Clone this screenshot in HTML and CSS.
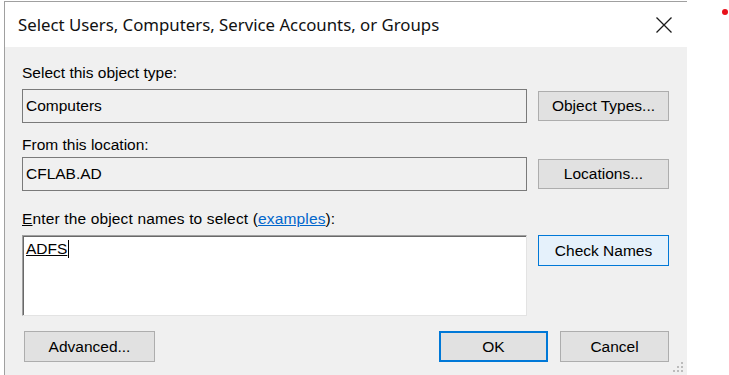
FILE: index.html
```html
<!doctype html>
<html>
<head>
	<title>Select Users, Computers, Service Accounts, or Groups</title>
	<meta charset="utf-8">
	<link rel="stylesheet" href="styles.css">
</head>
<body>
	<div class="dialog">
		<div class="titlebar">
			<span class="title">Select Users, Computers, Service Accounts, or Groups</span>
			<span class="close">
				<svg width="16" height="16" viewBox="0 0 16 16"><path d="M0.5 0.5 L15.5 15.5 M15.5 0.5 L0.5 15.5" stroke="#1a1a1a" stroke-width="1.3" fill="none"/></svg>
			</span>
		</div>

		<div class="content">
			<div class="label label1">Select this object type:</div>
			<div class="row row1">
				<div class="field">Computers</div>
				<button class="btn">Object Types...</button>
			</div>

			<div class="label label2">From this location:</div>
			<div class="row row2">
				<div class="field">CFLAB.AD</div>
				<button class="btn">Locations...</button>
			</div>

			<div class="label label3"><span class="key">E</span>nter the object names to select (<a href="#">examples</a>):</div>
			<div class="row row3">
				<div class="names"><span class="resolved">ADFS</span><span class="caret"></span></div>
				<button class="btn btn-focus">Check Names</button>
			</div>

			<div class="bottom">
				<button class="btn btn-advanced">Advanced...</button>
				<button class="btn btn-ok">OK</button>
				<button class="btn btn-cancel">Cancel</button>
			</div>
		</div>

		<svg class="grip" width="12" height="12" viewBox="0 0 12 12">
			<rect x="9" y="1" width="2" height="2" fill="#bcbcbc"/>
			<rect x="5" y="5" width="2" height="2" fill="#bcbcbc"/>
			<rect x="9" y="5" width="2" height="2" fill="#bcbcbc"/>
			<rect x="1" y="9" width="2" height="2" fill="#bcbcbc"/>
			<rect x="5" y="9" width="2" height="2" fill="#bcbcbc"/>
			<rect x="9" y="9" width="2" height="2" fill="#bcbcbc"/>
		</svg>
	</div>
	<div class="dot"></div>
</body>
</html>
```
FILE: styles.css
```css
html, body { margin: 0; padding: 0 }
body {
	background: #fff;
	font-family: "Liberation Sans", Arial, sans-serif;
	font-size: 15.5px;
	color: #000;
	overflow: hidden;
}
.dialog {
	position: relative;
	margin: 1px 0 0 4px;
	width: 682px;
	height: 373px;
	background: #f0f0f0;
	border-top: 1px solid #a0a0a0;
	border-left: 1px solid #a0a0a0;
}
.titlebar {
	display: flex;
	align-items: center;
	height: 45px;
	padding-left: 13px;
	background: #fff;
}
.title {
	font-family: "Noto Sans", sans-serif;
	font-size: 16.8px;
	color: #111;
}
.close {
	display: flex;
	align-items: center;
	justify-content: center;
	margin-left: auto;
	width: 46px;
	height: 45px;
}
.content {
	padding: 17px 0 0 17px;
}
.label {
	line-height: 18px;
	height: 18px;
	white-space: nowrap;
}
.label a { color: #0066cc; text-decoration: underline }
.key { text-decoration: underline }
.label2 { margin-top: 13px }
.label3 { margin-top: 19px; letter-spacing: 0.15px }
.row {
	display: flex;
	align-items: center;
	gap: 11px;
}
.row1 { margin-top: 7px }
.row2 { margin-top: 3px }
.row3 { margin-top: 7px; align-items: flex-start }
.field {
	box-sizing: border-box;
	width: 505px;
	height: 34px;
	line-height: 32px;
	padding-left: 3px;
	border: 1px solid #7a7a7a;
	background: #f0f0f0;
}
.names {
	box-sizing: border-box;
	width: 505px;
	height: 81px;
	padding: 4px 0 0 3px;
	background: #fff;
	border: 1px solid;
	border-color: #a0a0a0 #e3e3e3 #e3e3e3 #a0a0a0;
	box-shadow: inset 1px 1px 0 #696969;
	line-height: 18px;
}
.resolved { text-decoration: underline }
.caret {
	display: inline-block;
	width: 1px;
	height: 18px;
	margin-left: 1px;
	vertical-align: top;
	background: #000;
}
.btn {
	box-sizing: border-box;
	width: 131px;
	height: 30px;
	padding: 0;
	font-family: inherit;
	font-size: 15.5px;
	color: #000;
	background: #e1e1e1;
	border: 1px solid #adadad;
}
.btn-focus {
	height: 31px;
	background: #e5f1fb;
	border-color: #0078d7;
}
.bottom {
	display: flex;
	margin-top: 15px;
	padding-left: 2px;
}
.bottom .btn { height: 31px }
.btn-ok {
	width: 109px;
	margin-left: auto;
	margin-right: 12px;
	border: 2px solid #0078d7;
}
.btn-cancel { width: 109px; margin-right: 18px }
.grip {
	position: absolute;
	right: 3px;
	bottom: 2px;
}
.dot {
	position: absolute;
	left: 722px;
	top: 9px;
	width: 6px;
	height: 6px;
	border-radius: 50%;
	background: #e8101a;
}
```
